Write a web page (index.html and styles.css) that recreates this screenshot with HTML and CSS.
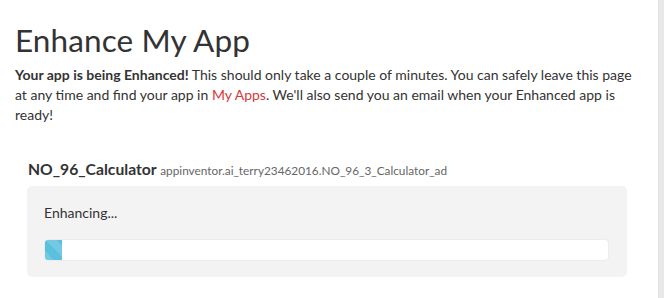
FILE: index.html
```html
<!DOCTYPE html>
<html lang="en">
<head>
    <meta charset="UTF-8">
    <meta name="viewport" content="width=device-width, initial-scale=1.0">
    <title>Enhance My App</title>
    <link rel="stylesheet" href="styles.css">
</head>
<body>
    <div class="page">
        <div class="container">
            <h1>Enhance My App</h1>

            <p class="intro">
                <strong>Your app is being Enhanced!</strong> This should only take a couple of minutes. You can safely leave this page at any time and find your app in <a href="#" class="link">My Apps</a>. We'll also send you an email when your Enhanced app is ready!
            </p>

            <div class="app-block">
                <div class="app-title">
                    <span class="app-name">NO_96_Calculator</span>
                    <span class="app-package">appinventor.ai_terry23462016.NO_96_3_Calculator_ad</span>
                </div>

                <div class="status-card">
                    <div class="status-text">Enhancing...</div>
                    <div class="progress">
                        <div class="progress-bar" style="width: 3%"></div>
                    </div>
                </div>
            </div>
        </div>
        <div class="scroll-strip"></div>
    </div>
</body>
</html>
```

FILE: styles.css
```css
:root {
    --text-color: #333333;
    --muted-color: #666666;
    --card-bg: #f3f3f3;
    --link-color: #d9383a;
    --bar-color: #5bc0de;
}

html, body {
    height: 100%;
}

body {
    font-family: 'Lato', 'Liberation Sans', sans-serif;
    color: var(--text-color);
    background: #ffffff;
    margin: 0;
    font-size: 14px;
    line-height: 20px;
}

.page {
    display: flex;
    min-height: 100%;
}

.container {
    flex: 1;
    padding: 0 15px;
}

.scroll-strip {
    width: 5px;
    background: #e9e9e9;
    border-left: 1px solid #e2e2e2;
}

h1 {
    font-size: 31.5px;
    font-weight: 400;
    letter-spacing: 0.1px;
    line-height: 36px;
    margin: 22px 0 7px;
}

.intro {
    margin: 0;
}

.link {
    color: var(--link-color);
    text-decoration: none;
}

.app-block {
    margin: 34px 16px 0 12px;
}

.app-title {
    margin-bottom: 5px;
    padding-left: 1px;
}

.app-name {
    font-size: 15.7px;
    font-weight: 700;
}

.app-package {
    font-size: 11.8px;
    color: var(--muted-color);
}

.status-card {
    background: var(--card-bg);
    border-radius: 5px;
    padding: 17px 18px 16px 17px;
}

.status-text {
    margin-bottom: 16px;
}

.progress {
    height: 22px;
    background: #ffffff;
    border: 1px solid #ececec;
    border-radius: 4px;
    box-sizing: border-box;
    overflow: hidden;
}

.progress-bar {
    height: 100%;
    background-color: var(--bar-color);
    background-image: linear-gradient(45deg, rgba(255,255,255,.15) 25%, transparent 25%, transparent 50%, rgba(255,255,255,.15) 50%, rgba(255,255,255,.15) 75%, transparent 75%, transparent);
    background-size: 22px 22px;
}
```
